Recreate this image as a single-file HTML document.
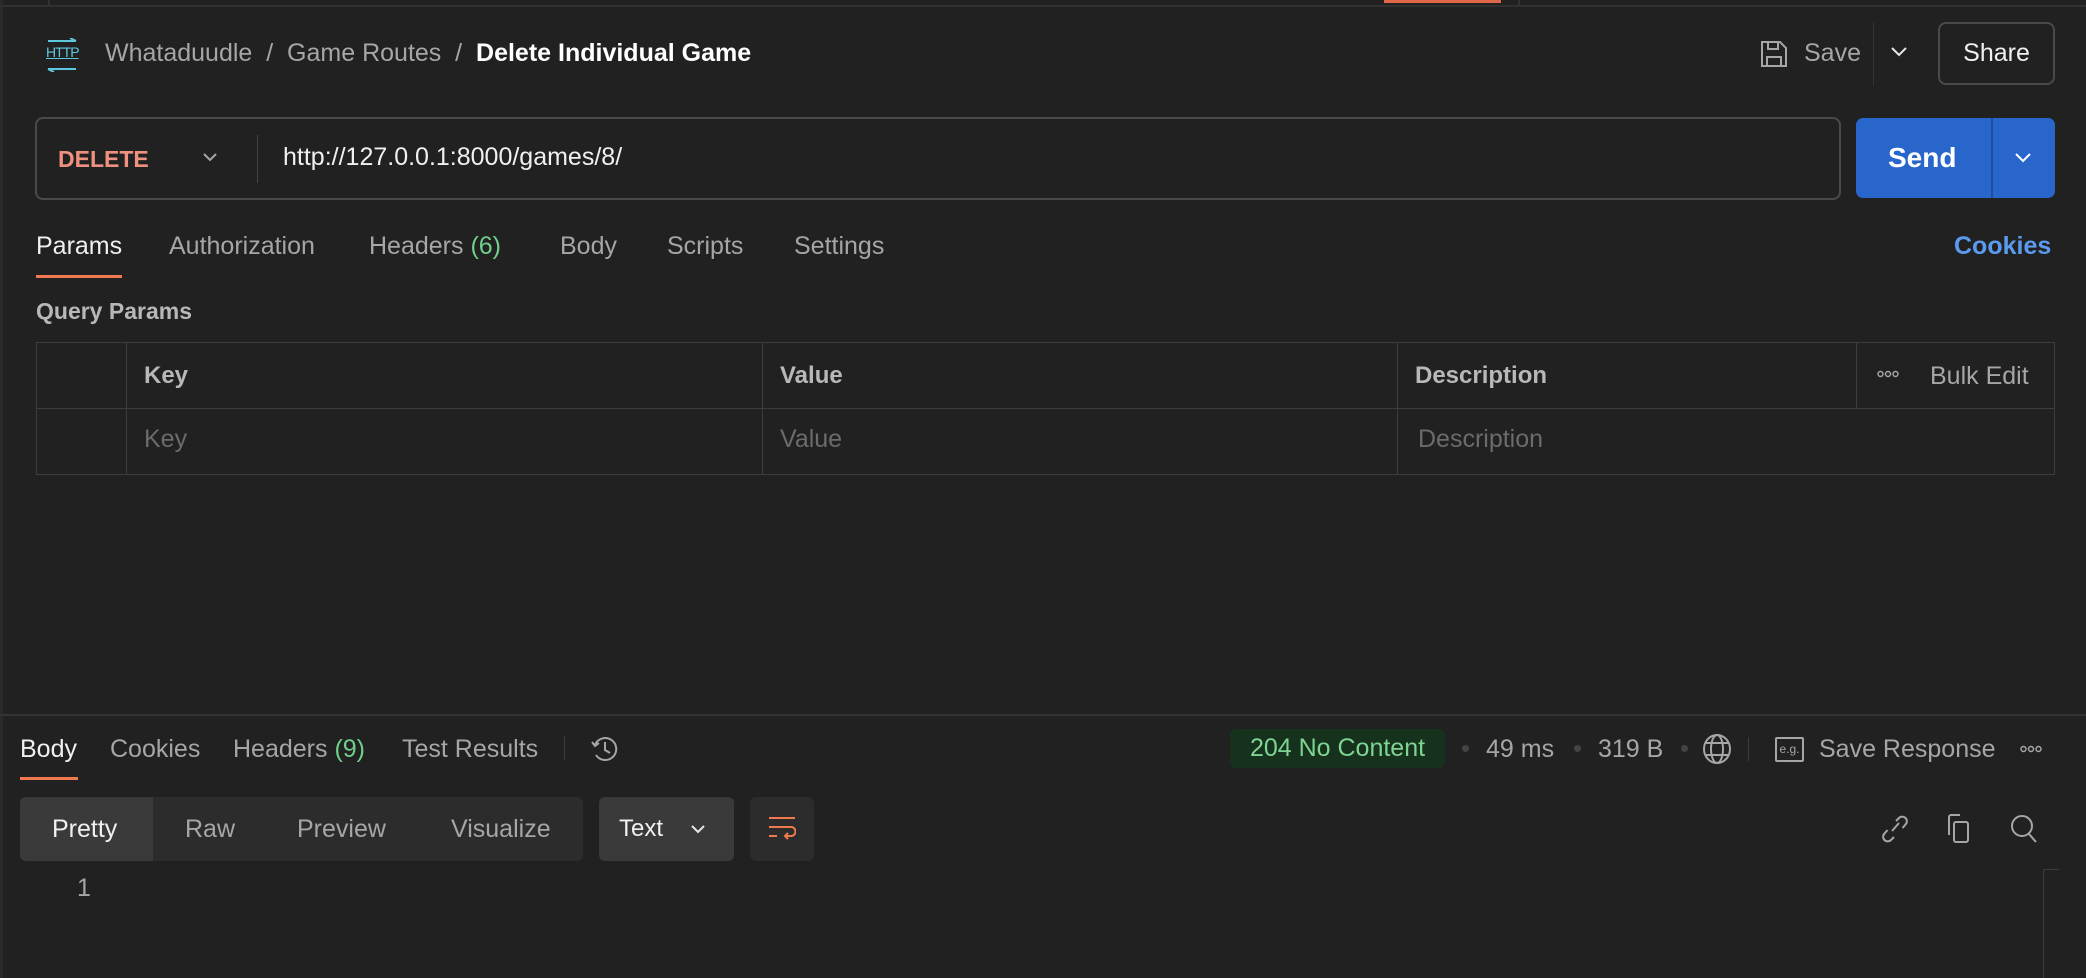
<!DOCTYPE html>
<html><head><meta charset="utf-8"><style>
*{margin:0;padding:0;box-sizing:border-box}
body{width:2086px;height:978px;background:#212121;font-family:"Liberation Sans",sans-serif;color:#a6a6a6;position:relative;overflow:hidden;font-size:25px}
.a{position:absolute;white-space:nowrap}
.w{color:#f0f0f0}
svg{position:absolute}
</style></head><body>
<div class="a" style="left:0;top:0;width:3px;height:978px;background:#2a2a2a"></div>
<div class="a" style="left:0;top:5px;width:2086px;height:2px;background:#303030"></div>
<div class="a" style="left:48px;top:0;width:2px;height:5px;background:#333"></div>
<div class="a" style="left:1384px;top:0;width:117px;height:3px;background:#e0674a"></div>
<div class="a" style="left:1518px;top:0;width:2px;height:5px;background:#333"></div>

<div class="a" style="left:46px;top:44px;font-size:14px;color:#5ec8de;letter-spacing:-1px;text-decoration:underline">HTTP</div>
<svg style="left:44px;top:38px" width="36" height="34" viewBox="0 0 36 34" fill="none" stroke="#5ec8de" stroke-width="2"><path d="M4 3h28M26 0l6 3"/><path d="M4 31h28M4 31l6 3"/></svg>
<div class="a" style="left:105px;top:39px">Whataduudle&nbsp;&nbsp;/&nbsp;&nbsp;Game Routes&nbsp;&nbsp;/&nbsp;&nbsp;<span style="font-weight:bold;color:#fff">Delete Individual Game</span></div>

<svg style="left:1760px;top:40px" width="28" height="28" viewBox="0 0 28 28" fill="none" stroke="#a6a6a6" stroke-width="2"><path d="M2 2h18l6 6v18H2z"/><path d="M8 2v7h10V2M7 26v-9h14v9"/></svg>
<div class="a" style="left:1804px;top:39px">Save</div>
<div class="a" style="left:1873px;top:22px;width:1px;height:64px;background:#333"></div>
<svg style="left:1890px;top:46px" width="18" height="12" viewBox="0 0 18 12" fill="none" stroke="#e6e6e6" stroke-width="2"><path d="M2 2l7 7 7-7"/></svg>
<div class="a" style="left:1938px;top:22px;width:117px;height:63px;border:2px solid #4a4a4a;border-radius:8px;color:#f0f0f0;text-align:center;line-height:59px">Share</div>

<div class="a" style="left:35px;top:117px;width:1806px;height:83px;border:2px solid #4a4a4a;border-radius:8px"></div>
<div class="a" style="left:58px;top:146px;color:#f0917f;font-weight:bold;font-size:23px">DELETE</div>
<svg style="left:202px;top:152px" width="16" height="10" viewBox="0 0 16 10" fill="none" stroke="#a6a6a6" stroke-width="2"><path d="M2 2l6 6 6-6"/></svg>
<div class="a" style="left:257px;top:135px;width:1px;height:48px;background:#444"></div>
<div class="a" style="left:283px;top:143px;color:#f0f0f0">http://127.0.0.1:8000/games/8/</div>
<div class="a" style="left:1856px;top:118px;width:199px;height:80px;background:#2966cc;border-radius:7px"></div>
<div class="a" style="left:1991px;top:118px;width:2px;height:80px;background:#1e4f9e"></div>
<div class="a" style="left:1888px;top:142px;color:#fff;font-weight:bold;font-size:28px">Send</div>
<svg style="left:2014px;top:152px" width="18" height="12" viewBox="0 0 18 12" fill="none" stroke="#fff" stroke-width="2"><path d="M2 2l7 7 7-7"/></svg>

<div class="a w" style="left:36px;top:232px">Params</div>
<div class="a" style="left:169px;top:232px">Authorization</div>
<div class="a" style="left:369px;top:232px">Headers <span style="color:#6fcf8a">(6)</span></div>
<div class="a" style="left:560px;top:232px">Body</div>
<div class="a" style="left:667px;top:232px">Scripts</div>
<div class="a" style="left:794px;top:232px">Settings</div>
<div class="a" style="left:36px;top:275px;width:86px;height:3px;background:#f07a4f"></div>
<div class="a" style="left:1954px;top:232px;color:#5a9bf0;font-weight:bold">Cookies</div>

<div class="a" style="left:36px;top:298px;font-weight:bold;font-size:23px;color:#b8b8b8">Query Params</div>

<div class="a" style="left:36px;top:342px;width:2019px;height:133px;border:1px solid #3d3d3d"></div>
<div class="a" style="left:36px;top:408px;width:2019px;height:1px;background:#3d3d3d"></div>
<div class="a" style="left:126px;top:342px;width:1px;height:133px;background:#3d3d3d"></div>
<div class="a" style="left:762px;top:342px;width:1px;height:133px;background:#3d3d3d"></div>
<div class="a" style="left:1397px;top:342px;width:1px;height:133px;background:#3d3d3d"></div>
<div class="a" style="left:1856px;top:342px;width:1px;height:66px;background:#3d3d3d"></div>
<div class="a" style="left:144px;top:362px;font-weight:bold;color:#b8b8b8;font-size:24px">Key</div>
<div class="a" style="left:780px;top:362px;font-weight:bold;color:#b8b8b8;font-size:24px">Value</div>
<div class="a" style="left:1415px;top:362px;font-weight:bold;color:#b8b8b8;font-size:24px">Description</div>
<svg style="left:1877px;top:370px" width="22" height="8" viewBox="0 0 22 8" fill="none" stroke="#a6a6a6" stroke-width="1.5"><circle cx="3.5" cy="4" r="2.5"/><circle cx="11" cy="4" r="2.5"/><circle cx="18.5" cy="4" r="2.5"/></svg>
<div class="a" style="left:1930px;top:362px">Bulk Edit</div>
<div class="a" style="left:144px;top:425px;color:#6b6b6b">Key</div>
<div class="a" style="left:780px;top:425px;color:#6b6b6b">Value</div>
<div class="a" style="left:1418px;top:425px;color:#6b6b6b">Description</div>

<div class="a" style="left:0;top:714px;width:2086px;height:2px;background:#333"></div>
<div class="a w" style="left:20px;top:735px">Body</div>
<div class="a" style="left:110px;top:735px">Cookies</div>
<div class="a" style="left:233px;top:735px">Headers <span style="color:#6fcf8a">(9)</span></div>
<div class="a" style="left:402px;top:735px">Test Results</div>
<div class="a" style="left:564px;top:736px;width:1px;height:24px;background:#3d3d3d"></div>
<svg style="left:590px;top:734px" width="30" height="30" viewBox="0 0 30 30" fill="none" stroke="#a6a6a6" stroke-width="2"><path d="M5 11A11 11 0 1 1 6 21"/><path d="M2 8l3 4 4-3"/><path d="M15 8v8l5 3"/></svg>
<div class="a" style="left:20px;top:777px;width:58px;height:3px;background:#f07a4f"></div>

<div class="a" style="left:1230px;top:729px;width:215px;height:39px;background:#16321c;border-radius:6px;color:#7ed492;text-align:center;line-height:39px">204 No Content</div>
<div class="a" style="left:1462px;top:745px;width:7px;height:7px;border-radius:50%;background:#444"></div>
<div class="a" style="left:1486px;top:735px">49 ms</div>
<div class="a" style="left:1574px;top:745px;width:7px;height:7px;border-radius:50%;background:#444"></div>
<div class="a" style="left:1598px;top:735px">319 B</div>
<div class="a" style="left:1681px;top:745px;width:7px;height:7px;border-radius:50%;background:#444"></div>
<svg style="left:1702px;top:733px" width="30" height="32" viewBox="0 0 30 32" fill="none" stroke="#a6a6a6" stroke-width="2"><ellipse cx="15" cy="16" rx="13" ry="14"/><ellipse cx="15" cy="16" rx="6" ry="14"/><path d="M3 10h24M3 22h24"/></svg>
<div class="a" style="left:1748px;top:737px;width:1px;height:24px;background:#3d3d3d"></div>
<div class="a" style="left:1775px;top:737px;width:29px;height:25px;border:2px solid #a6a6a6;border-radius:2px;font-size:12px;text-align:center;line-height:20px">e.g.</div>
<div class="a" style="left:1819px;top:735px">Save Response</div>
<svg style="left:2020px;top:745px" width="22" height="8" viewBox="0 0 22 8" fill="none" stroke="#a6a6a6" stroke-width="1.5"><circle cx="3.5" cy="4" r="2.5"/><circle cx="11" cy="4" r="2.5"/><circle cx="18.5" cy="4" r="2.5"/></svg>

<div class="a" style="left:20px;top:797px;width:563px;height:64px;background:#2c2c2c;border-radius:6px"></div>
<div class="a" style="left:20px;top:797px;width:133px;height:64px;background:#3a3a3a;border-radius:6px 0 0 6px"></div>
<div class="a w" style="left:52px;top:815px">Pretty</div>
<div class="a" style="left:185px;top:815px">Raw</div>
<div class="a" style="left:297px;top:815px">Preview</div>
<div class="a" style="left:451px;top:815px">Visualize</div>
<div class="a" style="left:599px;top:797px;width:135px;height:64px;background:#3a3a3a;border-radius:6px"></div>
<div class="a w" style="left:619px;top:815px;font-size:24px">Text</div>
<svg style="left:690px;top:824px" width="16" height="10" viewBox="0 0 16 10" fill="none" stroke="#e6e6e6" stroke-width="2"><path d="M2 2l6 6 6-6"/></svg>
<div class="a" style="left:750px;top:797px;width:64px;height:64px;background:#2c2c2c;border-radius:6px"></div>
<svg style="left:768px;top:816px" width="28" height="28" viewBox="0 0 28 28" fill="none" stroke="#f07a4f" stroke-width="2"><path d="M1 2h26M1 11h22a4 4 0 0 1 0 9h-6M20 17l-3 3 3 3M1 20h8"/></svg>

<svg style="left:1880px;top:813px" width="30" height="32" viewBox="0 0 30 32" fill="none" stroke="#a6a6a6" stroke-width="2"><path d="M12 18l7-8"/><path d="M16 8l3-3a4.5 4.5 0 0 1 6.5 6.5l-3 3.5M14 24l-3 3a4.5 4.5 0 0 1-6.5-6.5l3-3.5"/></svg>
<svg style="left:1944px;top:813px" width="30" height="32" viewBox="0 0 30 32" fill="none" stroke="#a6a6a6" stroke-width="2"><path d="M5 22V4a2 2 0 0 1 2-2h9"/><rect x="10" y="9" width="14" height="20" rx="2"/></svg>
<svg style="left:2009px;top:813px" width="30" height="32" viewBox="0 0 30 32" fill="none" stroke="#a6a6a6" stroke-width="2"><circle cx="13" cy="13" r="10"/><path d="M20 21l7 8"/></svg>

<div class="a" style="left:77px;top:874px;color:#a6a6a6">1</div>
<div class="a" style="left:2043px;top:869px;width:1px;height:109px;background:#3d3d3d"></div>
<div class="a" style="left:2043px;top:869px;width:16px;height:1px;background:#3d3d3d"></div>
</body></html>
